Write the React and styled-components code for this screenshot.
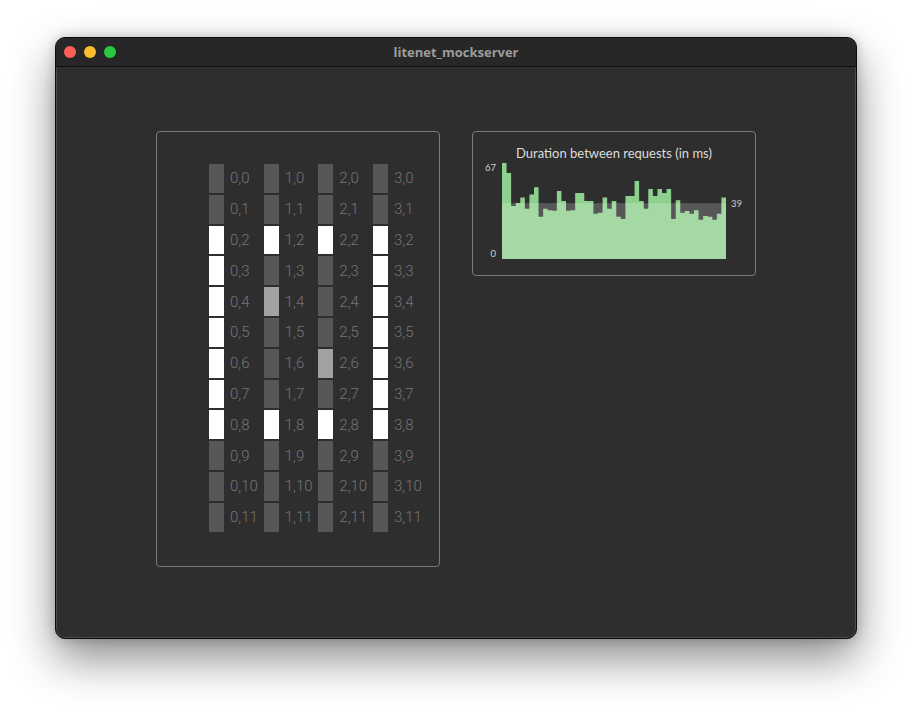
import React from 'react';
import styled, { createGlobalStyle } from 'styled-components';

const GlobalStyle = createGlobalStyle`
  html, body {
    margin: 0;
    padding: 0;
    background: #ffffff;
  }
  body {
    font-family: Roboto, "Liberation Sans", sans-serif;
  }
`

const Page = styled.div`
  width: 912px;
  height: 712px;
  padding: 37px 0 0 55px;
  box-sizing: border-box;
`

const Window = styled.div`
  width: 802px;
  height: 602px;
  box-sizing: border-box;
  border: 1px solid #0c0c0c;
  border-radius: 10px;
  background: #2e2e2e;
  overflow: hidden;
  box-shadow: inset 0 0 0 1px rgba(255, 255, 255, 0.14), 0 20px 45px rgba(0, 0, 0, 0.45), 0 0 12px rgba(0, 0, 0, 0.2);
  display: flex;
  flex-direction: column;
`

const TitleBar = styled.div`
  height: 28px;
  flex-shrink: 0;
  background: #272727;
  border-bottom: 1px solid #111111;
  display: grid;
  grid-template-columns: 1fr auto 1fr;
  align-items: center;
  padding: 0 8px;
`

const Lights = styled.div`
  display: flex;
  gap: 8px;
  align-items: center;
`

const Light = styled.span`
  width: 12px;
  height: 12px;
  border-radius: 50%;
  background: ${p => p.color};
`

const Title = styled.div`
  font-family: "Open Sans", Roboto, sans-serif;
  font-weight: 700;
  font-size: 13px;
  color: #9c9c9c;
`

const Body = styled.div`
  flex: 1;
  display: flex;
  align-items: flex-start;
  gap: 32px;
  padding: 64px 0 0 100px;
`

const Panel = styled.div`
  width: 284px;
  height: ${p => p.h}px;
  box-sizing: border-box;
  border: 1px solid #7a7a7a;
  border-radius: 4px;
`

const Grid = styled.div`
  display: grid;
  grid-template-columns: repeat(4, 54.67px);
  grid-template-rows: repeat(12, 28.8px);
  grid-auto-flow: column;
  row-gap: 2px;
  padding: 32px 0 0 52px;
`

const Cell = styled.div`
  display: flex;
  align-items: center;
`

const Bar = styled.div`
  width: 15px;
  height: 100%;
  background: ${p => (p.state === 'on' ? '#ffffff' : p.state === 'mid' ? '#a2a2a2' : '#575757')};
`

const Label = styled.span`
  margin-left: 6px;
  font-family: Roboto, "Liberation Sans", sans-serif;
  font-weight: 300;
  font-size: 15px;
  color: #757575;
`

const ChartTitle = styled.div`
  text-align: center;
  font-family: Lato, "Open Sans", sans-serif;
  font-size: 13px;
  color: #dcdcdc;
  padding-top: 13px;
  line-height: 16px;
`

const ChartSvg = styled.svg`
  display: block;
  margin-top: 1px;
  font-family: Lato, "Open Sans", sans-serif;
`

const columns = [
  { on: [2, 3, 4, 5, 6, 7, 8], mid: [] },
  { on: [2, 8], mid: [4] },
  { on: [2, 8], mid: [6] },
  { on: [2, 3, 4, 5, 6, 7, 8], mid: [] },
];

const durations = [
  67, 60, 37, 39, 43, 35, 45, 50, 29.5, 35, 34, 33.7, 47.5, 40.5, 33.7, 34, 46,
  46, 40.5, 40.5, 31.6, 32.3, 43, 35, 40.5, 29.5, 28, 44, 44, 54.4, 40.5, 35,
  48.8, 44, 48.8, 46, 48.8, 28, 41, 32.3, 33.5, 31.6, 34, 27.4, 30, 29.5, 27.4,
  31.6, 43,
];

const CHART_W = 224;
const CHART_H = 96;
const MAX = 67;
const AVG = 39;
const OFFSET_X = 29;
const OFFSET_Y = 1;

function DurationChart() {
  const step = CHART_W / durations.length;
  const y = v => OFFSET_Y + CHART_H - (v / MAX) * CHART_H;
  let d = `M ${OFFSET_X} ${y(0)}`;
  durations.forEach((v, i) => {
    d += ` L ${OFFSET_X + i * step} ${y(v)} L ${OFFSET_X + (i + 1) * step} ${y(v)}`;
  });
  d += ` L ${OFFSET_X + CHART_W} ${y(0)} Z`;

  return (
    <ChartSvg width="282" height="99">
      <path d={d} fill="#8ed08e" />
      <rect
        x={OFFSET_X}
        y={y(AVG)}
        width={CHART_W}
        height={y(0) - y(AVG)}
        fill="rgba(255,255,255,0.2)"
      />
      <text x="23" y="8.5" fontSize="9.5" fill="#cfcfcf" textAnchor="end">{MAX}</text>
      <text x="23" y="95" fontSize="9.5" fill="#cfcfcf" textAnchor="end">0</text>
      <text x="258" y={y(AVG) + 4} fontSize="9.5" fill="#cfcfcf">{AVG}</text>
    </ChartSvg>
  );
}

function LedGrid() {
  const cells = [];
  columns.forEach((col, c) => {
    for (let r = 0; r < 12; r++) {
      const state = col.on.includes(r) ? 'on' : col.mid.includes(r) ? 'mid' : 'off';
      cells.push(
        <Cell key={`${c}-${r}`}>
          <Bar state={state} />
          <Label>{c},{r}</Label>
        </Cell>
      );
    }
  });
  return <Grid>{cells}</Grid>;
}

export default function App() {
  return (
    <Page>
      <GlobalStyle />
      <Window>
        <TitleBar>
          <Lights>
            <Light color="#ff5f57" />
            <Light color="#febc2e" />
            <Light color="#28c840" />
          </Lights>
          <Title>litenet_mockserver</Title>
          <div />
        </TitleBar>
        <Body>
          <Panel h={436}>
            <LedGrid />
          </Panel>
          <Panel h={145}>
            <ChartTitle>Duration between requests (in ms)</ChartTitle>
            <DurationChart />
          </Panel>
        </Body>
      </Window>
    </Page>
  );
}
